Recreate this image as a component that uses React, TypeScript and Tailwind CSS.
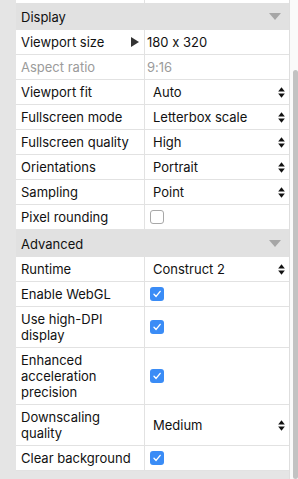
import React from "react";

type Value =
  | { type: "text"; text: string; muted?: boolean }
  | { type: "select"; text: string }
  | { type: "check"; checked: boolean };

type Row =
  | { kind: "header"; label: string }
  | { kind: "row"; lines: string[]; value: Value; muted?: boolean; expand?: boolean };

const rows: Row[] = [
  { kind: "header", label: "Display" },
  { kind: "row", lines: ["Viewport size"], value: { type: "text", text: "180 x 320" }, expand: true },
  { kind: "row", lines: ["Aspect ratio"], value: { type: "text", text: "9:16", muted: true }, muted: true },
  { kind: "row", lines: ["Viewport fit"], value: { type: "select", text: "Auto" } },
  { kind: "row", lines: ["Fullscreen mode"], value: { type: "select", text: "Letterbox scale" } },
  { kind: "row", lines: ["Fullscreen quality"], value: { type: "select", text: "High" } },
  { kind: "row", lines: ["Orientations"], value: { type: "select", text: "Portrait" } },
  { kind: "row", lines: ["Sampling"], value: { type: "select", text: "Point" } },
  { kind: "row", lines: ["Pixel rounding"], value: { type: "check", checked: false } },
  { kind: "header", label: "Advanced" },
  { kind: "row", lines: ["Runtime"], value: { type: "select", text: "Construct 2" } },
  { kind: "row", lines: ["Enable WebGL"], value: { type: "check", checked: true } },
  { kind: "row", lines: ["Use high-DPI", "display"], value: { type: "check", checked: true } },
  { kind: "row", lines: ["Enhanced", "acceleration", "precision"], value: { type: "check", checked: true } },
  { kind: "row", lines: ["Downscaling", "quality"], value: { type: "select", text: "Medium" } },
  { kind: "row", lines: ["Clear background"], value: { type: "check", checked: true } },
];

function SelectArrows() {
  return (
    <svg width="7" height="11" viewBox="0 0 7 11" className="shrink-0">
      <path d="M3.5 0.3 L6.8 4.6 L0.2 4.6 Z" fill="#111111" />
      <path d="M3.5 10.7 L6.8 6.4 L0.2 6.4 Z" fill="#111111" />
    </svg>
  );
}

function Checkbox({ checked }: { checked: boolean }) {
  if (!checked) {
    return <div className="ml-[5px] h-[14px] w-[14px] rounded-[3px] border border-[#a8a8a8] bg-white" />;
  }
  return (
    <div className="ml-[5px] flex h-[14px] w-[14px] items-center justify-center rounded-[3px] bg-[#3a8cf6]">
      <svg width="10" height="10" viewBox="0 0 10 10">
        <path d="M2 5.3 L4.1 7.4 L8.2 2.4" fill="none" stroke="#ffffff" strokeWidth="1.4" strokeLinecap="round" strokeLinejoin="round" />
      </svg>
    </div>
  );
}

function ValueCell({ value }: { value: Value }) {
  if (value.type === "text") {
    return (
      <div className={`flex flex-1 items-center pl-[2px] ${value.muted ? "text-[#9b9b9b]" : "text-[#111111]"}`}>
        {value.text}
      </div>
    );
  }
  if (value.type === "select") {
    return (
      <div className="flex flex-1 items-center justify-between pl-[8px] pr-[4px] text-[#111111]">
        <span>{value.text}</span>
        <SelectArrows />
      </div>
    );
  }
  return (
    <div className="flex flex-1 items-center">
      <Checkbox checked={value.checked} />
    </div>
  );
}

export default function App() {
  return (
    <div
      className="flex h-[479px] w-[298px] overflow-hidden bg-[#e5e5e5] text-[13px] leading-[16px] [font-feature-settings:'calt'_0]"
      style={{ fontFamily: "Inter, 'Noto Sans', sans-serif" }}
    >
      <div className="flex w-[289px] flex-col pl-[16px]">
        <div className="flex h-[3px] bg-white">
          <div className="w-[129px] border-r border-[#e2e2e2]" />
        </div>
        {rows.map((row, i) =>
          row.kind === "header" ? (
            <div key={i} className="flex h-[27px] items-center justify-between bg-[#e1e1e1] pl-[5px] pr-[8px] text-[#111111]">
              <span>{row.label}</span>
              <svg width="12" height="7" viewBox="0 0 12 7">
                <path d="M0 0 L12 0 L6 7 Z" fill="#a6a6a6" />
              </svg>
            </div>
          ) : (
            <div key={i} className="flex border-b border-[#e2e2e2] bg-white">
              <div
                className={`flex w-[129px] items-center justify-between border-r border-[#e2e2e2] py-[4px] pl-[5px] pr-[5px] ${
                  row.muted ? "text-[#9b9b9b]" : "text-[#111111]"
                }`}
              >
                <span>
                  {row.lines.map((l, j) => (
                    <React.Fragment key={j}>
                      {j > 0 && <br />}
                      {l}
                    </React.Fragment>
                  ))}
                </span>
                {row.expand && (
                  <svg width="8" height="10" viewBox="0 0 8 10" className="shrink-0">
                    <path d="M0 0 L8 5 L0 10 Z" fill="#333333" />
                  </svg>
                )}
              </div>
              <ValueCell value={row.value} />
            </div>
          )
        )}
      </div>
      <div className="flex w-[9px] flex-col border-l border-[#dedede] bg-[#fafafa]">
        <div className="ml-[3px] mt-[70px] h-[440px] w-[5px] rounded-full bg-[#c2c2c2]" />
      </div>
    </div>
  );
}
